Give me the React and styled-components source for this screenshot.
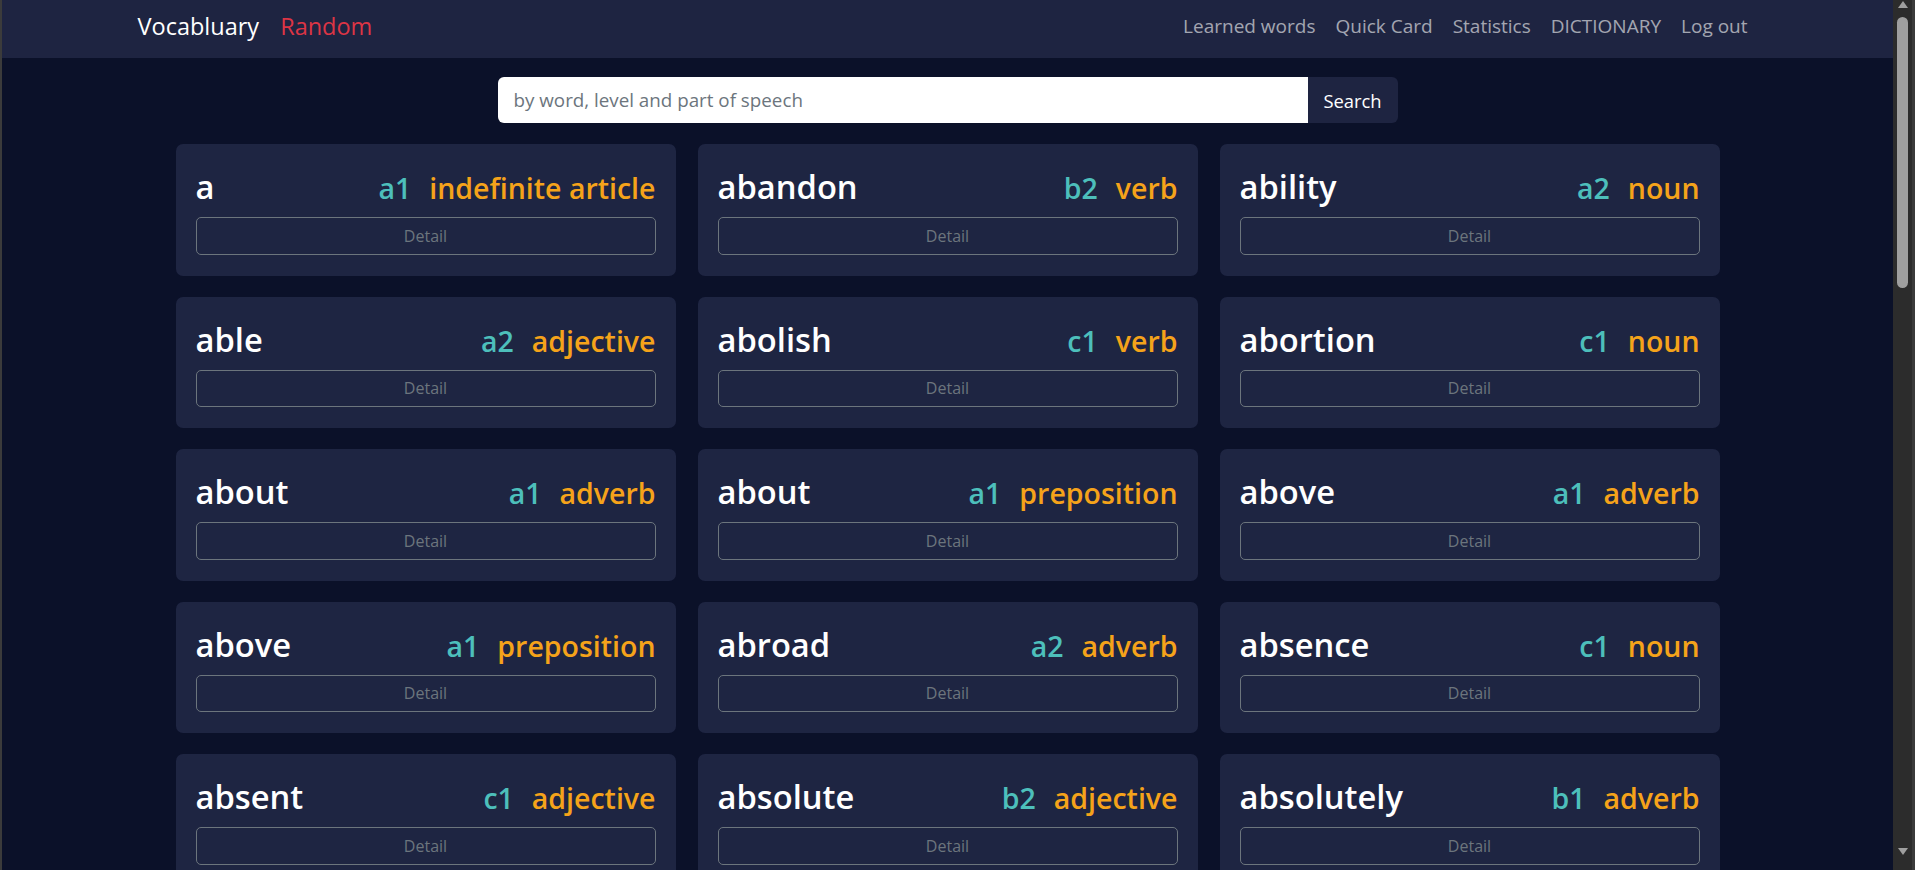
import React from 'react';
import styled, { createGlobalStyle } from 'styled-components';

// Global page styles
const GlobalStyle = createGlobalStyle`
  html, body {
    margin: 0;
    padding: 0;
    background-color: #0b1129;
    font-family: "Open Sans", "Noto Sans", sans-serif;
  }
`;

const Shell = styled.div`
  display: flex;
  align-items: flex-start;
  min-height: 100vh;
  border-left: 2px solid #3b3b3b;
`;

const Main = styled.main`
  flex: 1;
  min-width: 0;
  padding-bottom: 40px;
`;

// Windows-like scrollbar drawn beside the page
const ScrollTrack = styled.aside`
  position: sticky;
  top: 0;
  width: 19px;
  height: 100vh;
  flex-shrink: 0;
  background-color: #2c2c2c;
  border-right: 3px solid #3b3b3b;
  display: flex;
  flex-direction: column;
  align-items: center;
  padding: 1px 0 15px;
  box-sizing: border-box;
  width: 22px;
`;

const Arrow = styled.div`
  width: 0;
  height: 0;
  border-left: 5.5px solid transparent;
  border-right: 5.5px solid transparent;
  ${(p) =>
    p.$down
      ? 'border-top: 7px solid #9f9f9f; margin-top: auto;'
      : 'border-bottom: 7px solid #9f9f9f;'}
`;

const Thumb = styled.div`
  width: 11px;
  height: 271px;
  margin-top: 9px;
  border-radius: 6px;
  background-color: #9f9f9f;
`;

// Navbar
const Navbar = styled.nav`
  background-color: #1e2441;
  height: 58px;
`;

const NavContainer = styled.div`
  max-width: 1644px;
  height: 100%;
  margin: 0 auto;
  padding: 0 12px 7px;
  box-sizing: border-box;
  display: flex;
  align-items: center;
  justify-content: space-between;
`;

const Brand = styled.div`
  display: flex;
  align-items: center;
  gap: 21px;
  font-size: 23.5px;
`;

const BrandLink = styled.a`
  color: ${(p) => (p.$accent ? '#dc3545' : '#ffffff')};
  text-decoration: none;
  cursor: pointer;
`;

const NavLinks = styled.div`
  display: flex;
  align-items: center;
`;

const NavLink = styled.a`
  padding: 0 10px;
  font-size: 19px;
  color: rgba(255, 255, 255, 0.6);
  text-decoration: none;
  cursor: pointer;
`;

// Search
const SearchForm = styled.form`
  width: 900px;
  height: 46px;
  margin: 19px auto 21px;
  display: flex;
`;

const SearchInput = styled.input`
  flex: 1;
  border: none;
  border-radius: 6px 0 0 6px;
  padding: 0 16px;
  font-family: inherit;
  font-size: 18.8px;
  color: #212529;
  background: #ffffff;
  outline: none;

  &::placeholder {
    color: #6c757d;
  }
`;

const SearchButton = styled.button`
  width: 90px;
  border: none;
  border-radius: 0 6px 6px 0;
  background-color: #1e2441;
  color: #ffffff;
  font-family: inherit;
  font-size: 18.4px;
  cursor: pointer;
`;

// Word cards
const Grid = styled.div`
  width: 1544px;
  margin: 0 auto;
  display: grid;
  grid-template-columns: repeat(3, 1fr);
  column-gap: 22px;
  row-gap: 21px;
`;

const Card = styled.div`
  background-color: #1e2542;
  border-radius: 7px;
  padding: 24px 20px 21px;
`;

const CardHeader = styled.div`
  display: flex;
  align-items: baseline;
  justify-content: space-between;
  margin-bottom: 10px;
`;

const Word = styled.span`
  font-size: 32.7px;
  line-height: 1.17;
  font-weight: 600;
  color: #ffffff;
`;

const Meta = styled.div`
  display: flex;
  align-items: baseline;
  gap: 18px;
  font-size: 28.5px;
  font-weight: 600;
`;

const Level = styled.span`
  color: #4dbfbb;
`;

const Pos = styled.span`
  color: #f5a31a;
`;

const DetailButton = styled.button`
  display: block;
  width: 100%;
  height: 37.5px;
  background: transparent;
  border: 1px solid #6c757d;
  border-radius: 5px;
  color: #6c757d;
  font-family: inherit;
  font-size: 16px;
  cursor: pointer;
`;

const WORDS = `a|a1|indefinite article
abandon|b2|verb
ability|a2|noun
able|a2|adjective
abolish|c1|verb
abortion|c1|noun
about|a1|adverb
about|a1|preposition
above|a1|adverb
above|a1|preposition
abroad|a2|adverb
absence|c1|noun
absent|c1|adjective
absolute|b2|adjective
absolutely|b1|adverb`
  .split('\n')
  .map((line) => {
    const [word, level, pos] = line.split('|');
    return { word, level, pos };
  });

const App = () => {
  return (
    <>
      <GlobalStyle />
      <Shell>
        <Main>
          <Navbar>
            <NavContainer>
              <Brand>
                <BrandLink>Vocabluary</BrandLink>
                <BrandLink $accent>Random</BrandLink>
              </Brand>
              <NavLinks>
                <NavLink>Learned words</NavLink>
                <NavLink>Quick Card</NavLink>
                <NavLink>Statistics</NavLink>
                <NavLink>DICTIONARY</NavLink>
                <NavLink>Log out</NavLink>
              </NavLinks>
            </NavContainer>
          </Navbar>

          <SearchForm onSubmit={(e) => e.preventDefault()}>
            <SearchInput placeholder="by word, level and part of speech" />
            <SearchButton type="submit">Search</SearchButton>
          </SearchForm>

          <Grid>
            {WORDS.map((item, i) => (
              <Card key={i}>
                <CardHeader>
                  <Word>{item.word}</Word>
                  <Meta>
                    <Level>{item.level}</Level>
                    <Pos>{item.pos}</Pos>
                  </Meta>
                </CardHeader>
                <DetailButton>Detail</DetailButton>
              </Card>
            ))}
          </Grid>
        </Main>

        <ScrollTrack>
          <Arrow />
          <Thumb />
          <Arrow $down />
        </ScrollTrack>
      </Shell>
    </>
  );
};

export default App;
